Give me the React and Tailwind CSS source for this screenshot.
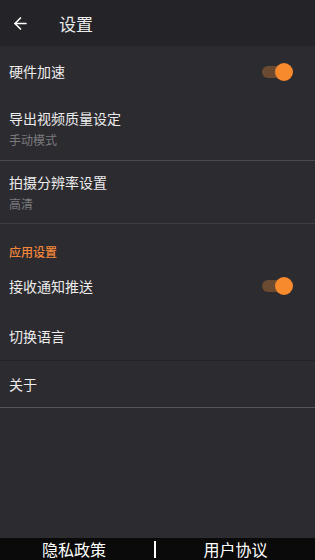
import React from "react";
import { ArrowLeft } from "lucide-react";

const Toggle = () => (
  <div className="relative w-[31px] h-[18px] flex items-center">
    <div className="w-[25px] h-[12px] rounded-full bg-[#6b4a32]" />
    <div className="absolute right-0 top-0 w-[18px] h-[18px] rounded-full bg-[#f88a2e]" />
  </div>
);

const App = () => {
  return (
    <div
      className="w-[315px] h-[560px] flex flex-col bg-[#2c2b30] text-[#ececec]"
      style={{ fontFamily: '"Noto Sans CJK SC", "Noto Sans", sans-serif' }}
    >
      <header className="flex items-center h-[46px] bg-[#242428] flex-shrink-0">
        <button className="ml-[11px] text-white">
          <ArrowLeft size={19} strokeWidth={2} />
        </button>
        <h1 className="ml-[29px] text-[17px] leading-none">设置</h1>
      </header>

      <div className="flex-grow">
        <div className="flex items-center justify-between h-[51px] pl-[9px] pr-[22px]">
          <span className="text-[14px]">硬件加速</span>
          <Toggle />
        </div>

        <div className="flex flex-col justify-center h-[64px] pl-[9px] border-b border-[#4a494e]">
          <span className="text-[14px] leading-[20px]">导出视频质量设定</span>
          <span className="text-[12px] leading-[18px] mt-[3px] text-[#7b7a7e]">手动模式</span>
        </div>

        <div className="flex flex-col justify-center h-[63px] pl-[9px] border-b border-[#3f3e43]">
          <span className="text-[14px] leading-[20px]">拍摄分辨率设置</span>
          <span className="text-[12px] leading-[18px] mt-[3px] text-[#7b7a7e]">高清</span>
        </div>

        <div className="h-[39px] pl-[9px] pt-[14px]">
          <span className="text-[12px] leading-[18px] text-[#f5873a] font-medium">应用设置</span>
        </div>

        <div className="flex items-center justify-between h-[46px] pl-[9px] pr-[22px]">
          <span className="text-[14px]">接收通知推送</span>
          <Toggle />
        </div>

        <div className="flex items-center h-[52px] pl-[9px] pt-[4px] border-b border-[#242328]">
          <span className="text-[14px]">切换语言</span>
        </div>

        <div className="flex items-center h-[47px] pl-[9px] border-b border-[#55545a]">
          <span className="text-[14px]">关于</span>
        </div>
      </div>

      <footer className="flex items-center h-[22px] bg-[#0a0a0a] text-white text-[16px] flex-shrink-0">
        <span className="w-[148px] text-center leading-none">隐私政策</span>
        <span className="ml-[6px] w-[2px] h-[17px] bg-white" />
        <span className="flex-1 text-center leading-none">用户协议</span>
      </footer>
    </div>
  );
};

export default App;
